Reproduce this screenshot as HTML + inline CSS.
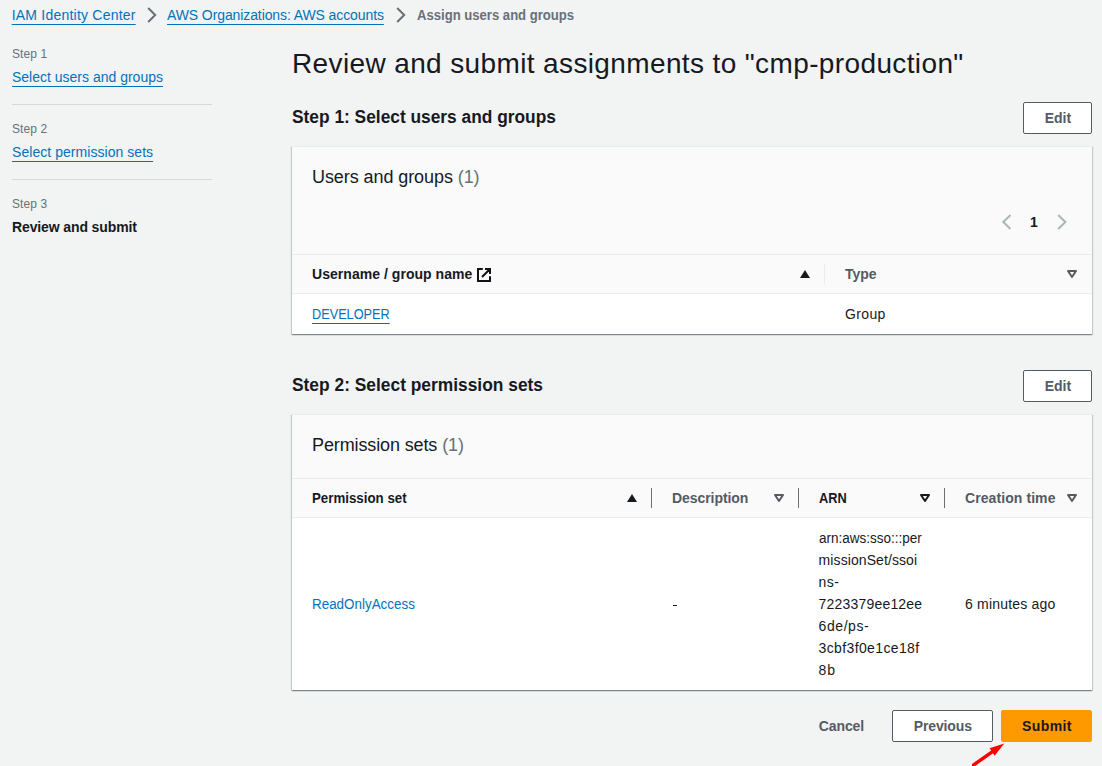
<!DOCTYPE html>
<html><head><meta charset="utf-8">
<style>
html,body{margin:0;padding:0}
body{width:1102px;height:766px;overflow:hidden;position:relative;background:#f2f3f3;font-family:"Liberation Sans",sans-serif;color:#16191f}
.t{position:absolute;white-space:nowrap;font-size:14px;line-height:20px}
.b{font-weight:700}
.lk{color:#0073bb;text-decoration:underline;text-decoration-thickness:1px;text-underline-offset:4px}
.lk2{color:#0073bb}
.sec{color:#687078}
.gr{color:#545b64}
.s12{font-size:12px;line-height:16px}
.s18{font-size:18px;line-height:24px}
.sep{position:absolute;left:12px;width:200px;height:1px;background:#d5dbdb}
.card{position:absolute;left:292px;width:800px;background:#fff;border-top:1px solid #eaeded;box-shadow:0 1px 1px 0 rgba(0,28,36,.3),1px 1px 1px 0 rgba(0,28,36,.15),-1px 1px 1px 0 rgba(0,28,36,.15)}
.hd{position:absolute;left:0;width:800px;background:#fafafa}
.ln{position:absolute;left:0;width:800px;height:1px;background:#eaeded}
.btn{position:absolute;box-sizing:border-box;border:1px solid #545b64;border-radius:2px;background:#fff;height:32px}
.ic{position:absolute;overflow:visible}
.dv{position:absolute;width:1px;background:#687078}
</style></head><body>

<!-- breadcrumbs -->
<div class="t lk" style="left:11.7px;top:5px;letter-spacing:.22px">IAM Identity Center</div>
<svg class="ic" style="left:144px;top:7px" width="16" height="16" viewBox="0 0 16 16"><path d="M4.2 1l7 7-7 7" fill="none" stroke="#687078" stroke-width="2"/></svg>
<div class="t lk" style="left:167px;top:5px;letter-spacing:-.1px">AWS Organizations: AWS accounts</div>
<svg class="ic" style="left:393px;top:7px" width="16" height="16" viewBox="0 0 16 16"><path d="M4.2 1l7 7-7 7" fill="none" stroke="#687078" stroke-width="2"/></svg>
<div class="t b sec" style="left:417px;top:5px;transform:scaleX(.935);transform-origin:0 0">Assign users and groups</div>

<!-- left nav -->
<div class="t s12 sec" style="left:12px;top:46px;letter-spacing:.1px">Step 1</div>
<div class="t lk" style="left:12px;top:67px">Select users and groups</div>
<div class="sep" style="top:104px"></div>
<div class="t s12 sec" style="left:12px;top:121px;letter-spacing:.1px">Step 2</div>
<div class="t lk" style="left:12px;top:142px;letter-spacing:.05px">Select permission sets</div>
<div class="sep" style="top:179px"></div>
<div class="t s12 sec" style="left:12px;top:196px;letter-spacing:.1px">Step 3</div>
<div class="t b" style="left:12px;top:217px;letter-spacing:-.12px">Review and submit</div>

<!-- title -->
<div class="t" style="left:292px;top:46px;font-size:28px;line-height:36px;letter-spacing:.375px">Review and submit assignments to "cmp-production"</div>

<!-- step 1 -->
<div class="t b s18" style="left:292px;top:105px;transform:scaleX(.963);transform-origin:0 0">Step 1: Select users and groups</div>
<div class="btn" style="left:1023px;top:102px;width:69px"></div>
<div class="t b gr" style="left:1044.7px;top:108px">Edit</div>

<div class="card" style="top:146px;height:187px">
  <div class="hd" style="top:0;height:107px"></div>
  <div class="ln" style="top:107px"></div>
  <div class="hd" style="top:108px;height:38px"></div>
  <div class="ln" style="top:146px"></div>
</div>
<div class="t s18" style="left:312px;top:165px;letter-spacing:-.08px">Users and groups <span class="sec">(1)</span></div>
<svg class="ic" style="left:998.7px;top:214px" width="16" height="16" viewBox="0 0 16 16"><path d="M11.5 1l-7.2 7 7.2 7" fill="none" stroke="#aab7b8" stroke-width="2"/></svg>
<div class="t b" style="left:1030px;top:212px">1</div>
<svg class="ic" style="left:1053.6px;top:214px" width="16" height="16" viewBox="0 0 16 16"><path d="M4.2 1l7.2 7-7.2 7" fill="none" stroke="#aab7b8" stroke-width="2"/></svg>

<div class="t b" style="left:312px;top:264px;letter-spacing:.04px">Username / group name</div>
<svg class="ic" style="left:477px;top:268px" width="14" height="14" viewBox="0 0 14 14"><path d="M5.8 1H1v12h12V8.2M8 1h5v5M13 1L5 9" fill="none" stroke="#0f1217" stroke-width="2"/></svg>
<svg class="ic" style="left:800px;top:270px" width="10" height="8" viewBox="0 0 10 8"><path d="M5 0L10 8H0z" fill="#16191f"/></svg>
<div class="dv" style="left:824px;top:264px;height:20px;background:#eaeded"></div>
<div class="t b gr" style="left:845px;top:264px">Type</div>
<svg class="ic" style="left:1067px;top:270px" width="10" height="8" viewBox="0 0 10 8"><path d="M1 1h8L5 7z" fill="none" stroke="#545b64" stroke-width="2" stroke-linejoin="round"/></svg>

<div class="t lk" style="left:312px;top:304px;transform:scaleX(.908);transform-origin:0 0">DEVELOPER</div>
<div class="t" style="left:845px;top:304px;letter-spacing:.37px">Group</div>

<!-- step 2 -->
<div class="t b s18" style="left:292px;top:373px;transform:scaleX(.965);transform-origin:0 0">Step 2: Select permission sets</div>
<div class="btn" style="left:1023px;top:370px;width:69px"></div>
<div class="t b gr" style="left:1044.7px;top:376px">Edit</div>

<div class="card" style="top:414px;height:275px">
  <div class="hd" style="top:0;height:63px"></div>
  <div class="ln" style="top:63px"></div>
  <div class="hd" style="top:64px;height:38px"></div>
  <div class="ln" style="top:102px"></div>
</div>
<div class="t s18" style="left:312px;top:433px;letter-spacing:-.12px">Permission sets <span class="sec">(1)</span></div>

<div class="t b" style="left:312px;top:488px;transform:scaleX(.95);transform-origin:0 0">Permission set</div>
<svg class="ic" style="left:627px;top:494px" width="10" height="8" viewBox="0 0 10 8"><path d="M5 0L10 8H0z" fill="#16191f"/></svg>
<div class="dv" style="left:651px;top:488px;height:20px"></div>
<div class="t b gr" style="left:672px;top:488px;letter-spacing:-.06px">Description</div>
<svg class="ic" style="left:774px;top:494px" width="10" height="8" viewBox="0 0 10 8"><path d="M1 1h8L5 7z" fill="none" stroke="#545b64" stroke-width="2" stroke-linejoin="round"/></svg>
<div class="dv" style="left:798px;top:488px;height:20px"></div>
<div class="t b" style="left:819px;top:488px;transform:scaleX(.913);transform-origin:0 0">ARN</div>
<svg class="ic" style="left:920px;top:494px" width="10" height="8" viewBox="0 0 10 8"><path d="M1 1h8L5 7z" fill="none" stroke="#16191f" stroke-width="2" stroke-linejoin="round"/></svg>
<div class="dv" style="left:944px;top:488px;height:20px"></div>
<div class="t b gr" style="left:965px;top:488px;letter-spacing:.08px">Creation time</div>
<svg class="ic" style="left:1067px;top:494px" width="10" height="8" viewBox="0 0 10 8"><path d="M1 1h8L5 7z" fill="none" stroke="#545b64" stroke-width="2" stroke-linejoin="round"/></svg>

<div class="t lk2" style="left:312px;top:594px;transform:scaleX(.958);transform-origin:0 0">ReadOnlyAccess</div>
<div style="position:absolute;left:672.5px;top:605px;width:4.5px;height:1.2px;background:#16191f"></div>
<div class="t" style="left:818.6px;top:528px;transform:scaleX(.965);transform-origin:0 0">arn:aws:sso:::per</div>
<div class="t" style="left:818.6px;top:550px;letter-spacing:0.09px">missionSet/ssoi</div>
<div class="t" style="left:818.6px;top:572px;letter-spacing:0.45px">ns-</div>
<div class="t" style="left:818.6px;top:594px;letter-spacing:0.19px">7223379ee12ee</div>
<div class="t" style="left:818.6px;top:616px;letter-spacing:0.57px">6de/ps-</div>
<div class="t" style="left:818.6px;top:638px;letter-spacing:0.37px">3cbf3f0e1ce18f</div>
<div class="t" style="left:818.6px;top:660px;letter-spacing:0.9px">8b</div>

<div class="t" style="left:965px;top:594px;letter-spacing:.19px">6 minutes ago</div>

<!-- footer -->
<div class="t b gr" style="left:818.7px;top:716px;letter-spacing:-.08px">Cancel</div>
<div class="btn" style="left:892px;top:710px;width:101px"></div>
<div class="t b gr" style="left:913.8px;top:716px;letter-spacing:-.14px">Previous</div>
<div class="btn" style="left:1001px;top:710px;width:91px;background:#ff9900;border-color:#ff9900"></div>
<div class="t b" style="left:1022px;top:716px;letter-spacing:.4px">Submit</div>

<svg class="ic" style="left:0;top:0" width="1102" height="766" viewBox="0 0 1102 766"><path d="M973.6 765L992.5 751.6" stroke="#ff0000" stroke-width="3.4" stroke-linecap="round" fill="none"/><path d="M1004.3 743.6L989.6 748.3L994.6 755.8z" fill="#ff0000"/></svg>
</body></html>
